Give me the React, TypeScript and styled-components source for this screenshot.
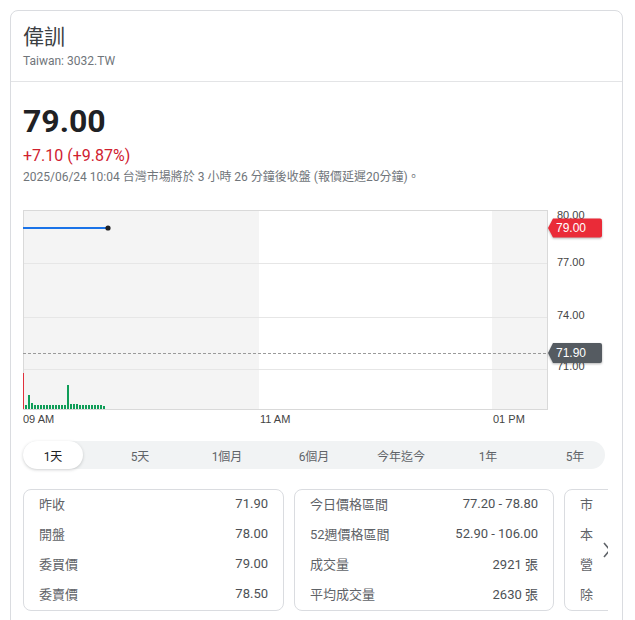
import React from 'react';
import styled, {createGlobalStyle} from 'styled-components';

const GlobalStyle = createGlobalStyle`
  html, body {
    margin: 0;
    padding: 0;
    background: #fff;
    width: 635px;
    height: 620px;
    overflow: hidden;
  }
  body {
    font-family: Roboto, Arial, "Noto Sans CJK TC", sans-serif;
    color: #202124;
  }
`;

const Page = styled.div`
  padding: 10px 12px 0 10px;
`;

const Card = styled.div`
  width: 613px;
  box-sizing: border-box;
  border: 1px solid #dadce0;
  border-radius: 8px;
  min-height: 640px;
`;

const Header = styled.div`
  padding: 12px 12px 12px;
  border-bottom: 1px solid #e3e4e6;
`;

const Title = styled.div`
  font-size: 21px;
  line-height: 28px;
  color: #3c4043;
  font-family: Roboto, "Noto Sans CJK TC", sans-serif;
`;

const Ticker = styled.div`
  font-size: 12px;
  line-height: 16px;
  margin-top: 2px;
  color: #70757a;
`;

const Body = styled.div`
  padding: 19px 14px 0 12px;
`;

const Price = styled.div`
  font-size: 32px;
  font-weight: 700;
  line-height: 40px;
  color: #202124;
`;

const Change = styled.div`
  font-size: 16px;
  line-height: 22px;
  margin-top: 4px;
  color: #d0212f;
`;

const Stamp = styled.div`
  font-size: 12px;
  line-height: 16px;
  margin-top: 2px;
  color: #70757a;
  font-family: Roboto, "Noto Sans CJK TC", sans-serif;
`;

const ChartBox = styled.svg`
  display: block;
  margin-top: 20px;
  font-family: "Liberation Sans", Arial, sans-serif;
  font-size: 11px;
`;

const Tabs = styled.div`
  margin-top: 11px;
  width: 582px;
  height: 28px;
  border-radius: 14px;
  background: #f1f3f4;
  display: flex;
  justify-content: space-between;
  align-items: center;
`;

const Tab = styled.div<{ $active?: boolean }>`
  width: 60px;
  height: 28px;
  border-radius: 14px;
  display: flex;
  align-items: center;
  justify-content: center;
  font-size: 12px;
  font-family: Roboto, "Noto Sans CJK TC", sans-serif;
  color: ${p => (p.$active ? '#202124' : '#5f6368')};
  background: ${p => (p.$active ? '#fff' : 'transparent')};
  box-shadow: ${p => (p.$active ? '0 1px 3px rgba(60,64,67,0.25)' : 'none')};
`;

const StatsWrap = styled.div`
  position: relative;
  margin-top: 20px;
  overflow: hidden;
`;

const StatsRow = styled.div`
  display: flex;
  gap: 10px;
`;

const StatCard = styled.div<{ $w: number }>`
  width: ${p => p.$w}px;
  box-sizing: border-box;
  border: 1px solid #dadce0;
  border-radius: 8px;
  padding: 0 15px 0 15px;
  flex-shrink: 0;
`;

const StatLine = styled.div`
  height: 30px;
  display: flex;
  align-items: center;
  justify-content: space-between;
  padding-bottom: 3px;
  box-sizing: border-box;
  font-size: 13px;
  color: #4d5156;
  font-family: Roboto, "Noto Sans CJK TC", sans-serif;
`;

const Label = styled.span`
  color: #5f6368;
`;

const MoreButton = styled.div`
  position: absolute;
  top: 1px;
  bottom: 1px;
  left: 570px;
  width: 28px;
  background: #fff;
  display: flex;
  align-items: center;
  justify-content: center;
`;

const tabs = ['1天', '5天', '1個月', '6個月', '今年迄今', '1年', '5年'];

const col1 = [
  ['昨收', '71.90'],
  ['開盤', '78.00'],
  ['委買價', '79.00'],
  ['委賣價', '78.50'],
];
const col2 = [
  ['今日價格區間', '77.20 - 78.80'],
  ['52週價格區間', '52.90 - 106.00'],
  ['成交量', '2921 張'],
  ['平均成交量', '2630 張'],
];
// only the first characters peek out from under the arrow
const col3 = [
  ['市', ''],
  ['本', ''],
  ['營', ''],
  ['除', ''],
];

const vols = [4, 14, 6, 4, 4, 4, 4, 4, 4, 4, 4, 4, 4, 4, 24, 5, 5, 5, 4, 4, 4, 4, 4, 4, 4, 4, 3];

function Chart() {
  return (
    <ChartBox width={600} height={225} viewBox="0 0 600 225">
      <rect x={0} y={5} width={236} height={199} fill="#f4f4f4" />
      <rect x={469} y={5} width={55} height={199} fill="#f4f4f4" />
      {[58.5, 112.5, 164.5].map(y => (
        <line key={y} x1={0} x2={524} y1={y} y2={y} stroke="#e6e6e6" />
      ))}
      <rect x={0.5} y={5.5} width={524} height={199} fill="none" stroke="#d9d9d9" />
      <line x1={0} x2={524} y1={148.5} y2={148.5} stroke="#9a9a9a" strokeDasharray="3,2" />
      <line x1={0.5} x2={0.5} y1={168} y2={204} stroke="#e0303c" />
      {vols.map((h, i) => (
        <rect key={i} x={2 + i * 3} y={204 - h} width={2} height={h} fill="#0f9d58" />
      ))}
      <line x1={0} x2={85} y1={23} y2={23} stroke="#1a73e8" strokeWidth={2} />
      <circle cx={85} cy={23} r={2.6} fill="#202124" />

      <g fill="#444" dominantBaseline="middle">
        <text x={534} y={11}>80.00</text>
        <text x={534} y={58.5}>77.00</text>
        <text x={534} y={111.5}>74.00</text>
        <text x={534} y={162.5}>71.00</text>
      </g>

      <g style={{filter: 'drop-shadow(0 1px 1px rgba(0,0,0,0.3))'}}>
        <path d="M525 23 L530 13.5 H577 Q579 13.5 579 15.5 V30.5 Q579 32.5 577 32.5 H530 Z" fill="#ea2b38" />
        <path d="M525 148 L530 138 H577 Q579 138 579 140 V156 Q579 158 577 158 H530 Z" fill="#555b61" />
      </g>
      <g fill="#fff" dominantBaseline="middle" fontSize={12}>
        <text x={533} y={23.5}>79.00</text>
        <text x={533} y={148.5}>71.90</text>
      </g>

      <g fill="#444" dominantBaseline="middle">
        <text x={0} y={215.5}>09 AM</text>
        <text x={237} y={215.5}>11 AM</text>
        <text x={470} y={215.5}>01 PM</text>
      </g>
    </ChartBox>
  );
}

function StatBlock({rows, w}: {rows: string[][]; w: number}) {
  return (
    <StatCard $w={w}>
      {rows.map(([k, v]) => (
        <StatLine key={k}>
          <Label>{k}</Label>
          {v && <span>{v}</span>}
        </StatLine>
      ))}
    </StatCard>
  );
}

export default function App() {
  return (
    <>
      <GlobalStyle />
      <Page>
        <Card>
          <Header>
            <Title>偉訓</Title>
            <Ticker>Taiwan: 3032.TW</Ticker>
          </Header>
          <Body>
            <Price>79.00</Price>
            <Change>+7.10 (+9.87%)</Change>
            <Stamp>2025/06/24 10:04 台灣市場將於 3 小時 26 分鐘後收盤 (報價延遲20分鐘)。</Stamp>
            <Chart />
            <Tabs>
              {tabs.map((t, i) => (
                <Tab key={t} $active={i === 0}>{t}</Tab>
              ))}
            </Tabs>
            <StatsWrap>
              <StatsRow>
                <StatBlock rows={col1} w={261} />
                <StatBlock rows={col2} w={260} />
                <StatBlock rows={col3} w={260} />
              </StatsRow>
              <MoreButton>
                <svg width="10" height="18" viewBox="0 0 10 18">
                  <path d="M2 2 L8 9 L2 16" fill="none" stroke="#5f6368" strokeWidth="1.6" />
                </svg>
              </MoreButton>
            </StatsWrap>
          </Body>
        </Card>
      </Page>
    </>
  );
}
